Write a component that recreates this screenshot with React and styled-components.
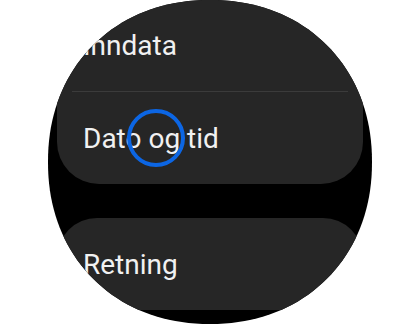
import React from "react";
import styled, { createGlobalStyle } from "styled-components";

const GlobalStyle = createGlobalStyle`
  html, body {
    margin: 0;
    padding: 0;
    background: #ffffff;
  }
  body {
    font-family: Roboto, "Noto Sans", "Liberation Sans", sans-serif;
  }
`;

// the watch glass is a bit squarer than a circle, so clip it to a superellipse
const squircle = (size, n, steps = 160) => {
  const r = size / 2;
  const pts = [];
  for (let i = 0; i < steps; i++) {
    const t = (i / steps) * Math.PI * 2;
    const c = Math.cos(t);
    const s = Math.sin(t);
    const x = r + r * Math.sign(c) * Math.pow(Math.abs(c), 2 / n);
    const y = r + r * Math.sign(s) * Math.pow(Math.abs(s), 2 / n);
    pts.push(`${x.toFixed(2)} ${y.toFixed(2)}`);
  }
  return `M ${pts.join(" L ")} Z`;
};

const FACE = 324;
const facePath = squircle(FACE, 2.12);

const Page = styled.div`
  width: 420px;
  height: 325px;
  display: flex;
  justify-content: center;
  align-items: flex-start;
`;

const Face = styled.div`
  position: relative;
  width: ${FACE}px;
  height: ${FACE}px;
  background: #000;
  clip-path: path("${facePath}");
  display: flex;
  flex-direction: column;
`;

const Card = styled.div`
  margin: ${(p) => (p.$first ? "0 9px" : "34px 9px 0")};
  background: #262626;
  border-radius: ${(p) => (p.$first ? "0 0 42px 42px" : "40px 40px 0 0")};
  display: flex;
  flex-direction: column;
`;

const Row = styled.div`
  height: ${(p) => p.$h}px;
  display: flex;
  align-items: center;
  padding-left: 26px;
  color: #f1f1f1;
  font-size: 28px;
`;

const Divider = styled.div`
  height: 1px;
  margin: 0 15px;
  background: #3b3b3b;
`;

const Touch = styled.div`
  position: absolute;
  left: ${(p) => p.$x - 29}px;
  top: ${(p) => p.$y - 29}px;
  width: 50px;
  height: 50px;
  border: 4px solid #0c66e4;
  border-radius: 50%;
`;

export default function App() {
  return (
    <>
      <GlobalStyle />
      <Page>
        <Face>
          <Card $first>
            <Row $h={91}>Inndata</Row>
            <Divider />
            <Row $h={92}>Dato og tid</Row>
          </Card>
          <Card>
            <Row $h={92}>Retning</Row>
          </Card>
          <Touch $x={108} $y={138} />
        </Face>
      </Page>
    </>
  );
}
